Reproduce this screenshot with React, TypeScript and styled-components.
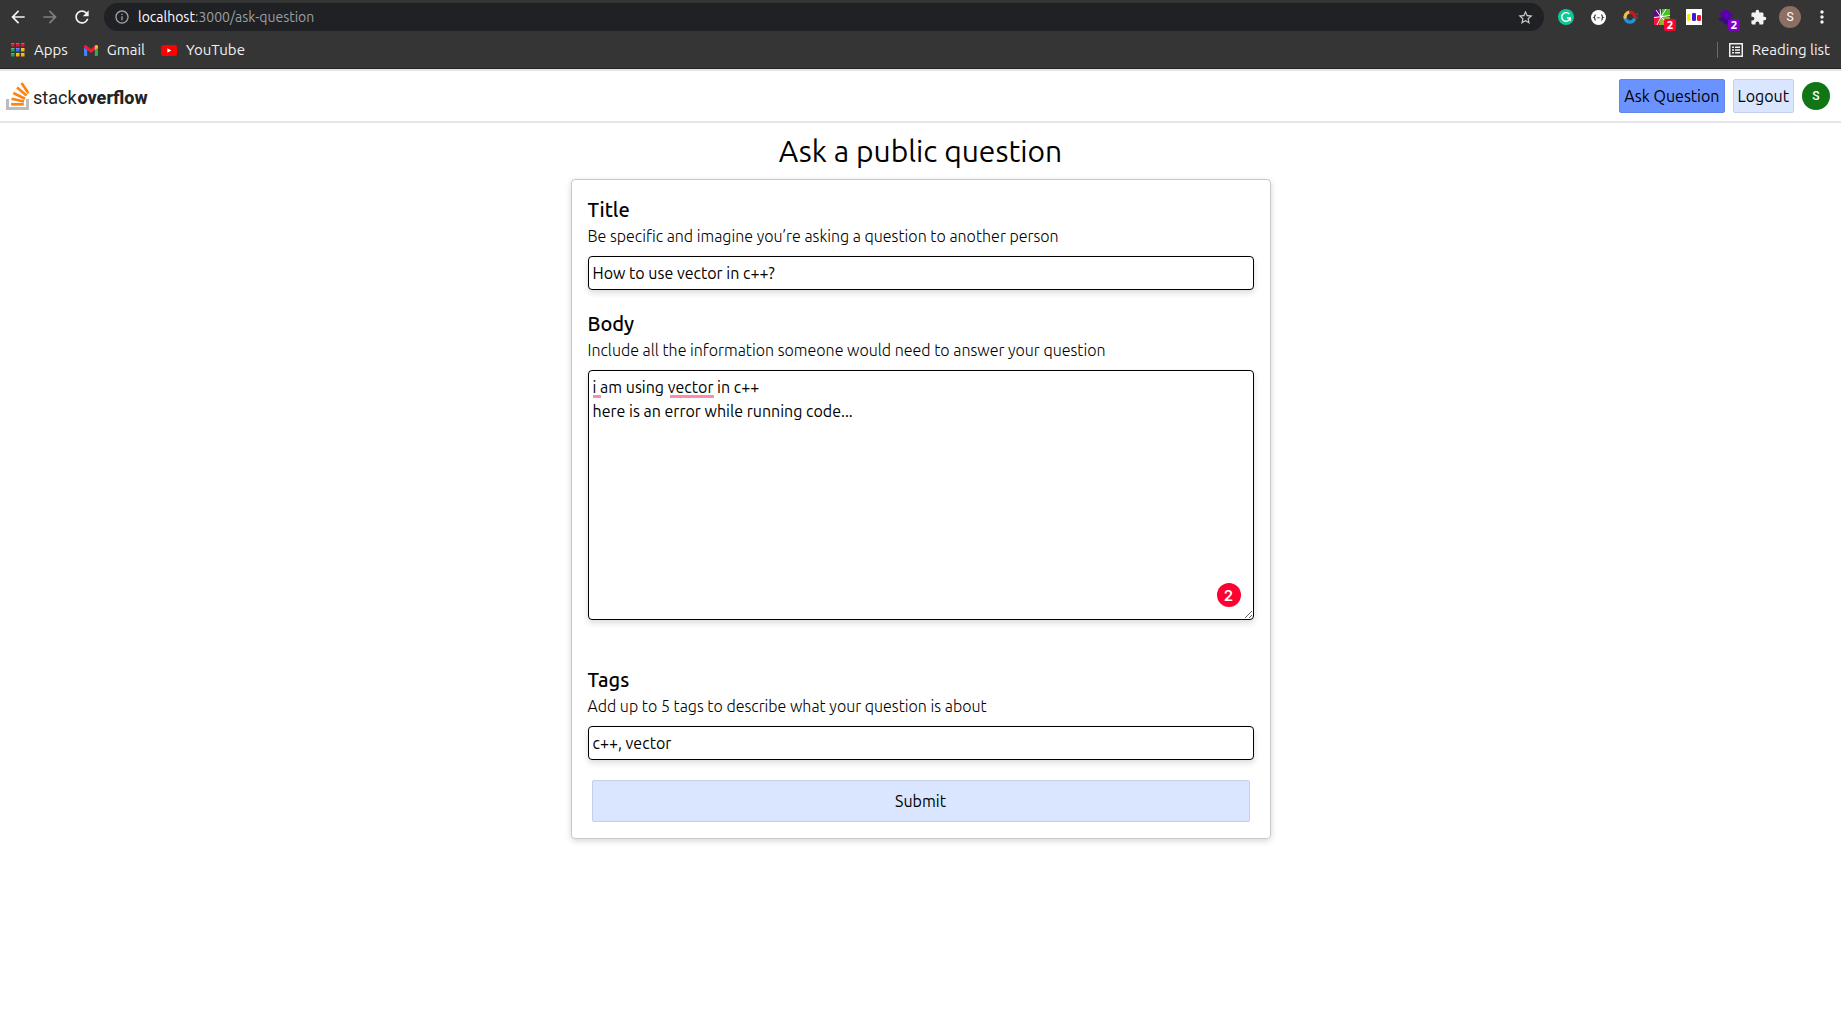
import React, { useState } from "react";
import styled, { createGlobalStyle } from "styled-components";
import { MdArrowBack, MdArrowForward, MdRefresh, MdInfoOutline, MdStarBorder, MdExtension, MdMoreVert } from "react-icons/md";

const GlobalStyle = createGlobalStyle`
  *, *::before, *::after { box-sizing: border-box; }
  body {
    margin: 0;
    background: #fff;
    color: #000;
    font-family: Ubuntu, "Noto Sans", "Open Sans", sans-serif;
    font-size: 16px;
    line-height: 24px;
  }
  button, input, textarea { font: inherit; color: inherit; margin: 0; }
`;

const Chrome = styled.div`
  background: #353535;
  border-bottom: 1px solid #222;
  color: #f1f1f1;
  font-size: 15px;
  line-height: 20px;
`;

const Toolbar = styled.div`
  display: flex;
  align-items: center;
  height: 34px;
  padding-right: 3px;
`;

const ToolButton = styled.button<{ $dim?: boolean }>`
  display: flex;
  align-items: center;
  justify-content: center;
  width: 32px;
  height: 32px;
  padding: 0;
  border: 0;
  background: none;
  color: ${(p) => (p.$dim ? "#808080" : "#f1f3f4")};
`;

const NavButtons = styled.div`
  display: flex;
  padding: 0 6px 0 2px;
`;

const AddressBar = styled.div`
  display: flex;
  flex: 1;
  align-items: center;
  gap: 8px;
  height: 28px;
  margin-right: 6px;
  padding: 0 10px;
  border-radius: 14px;
  background: #202124;
  color: #9aa0a6;
  font-size: 14px;
`;

const Address = styled.span`
  flex: 1;
  b { color: #fff; font-weight: 400; }
`;

const ProfileDot = styled.span`
  display: flex;
  align-items: center;
  justify-content: center;
  width: 22px;
  height: 22px;
  border-radius: 50%;
  background: #8d6e63;
  color: #fff;
  font: 12px/1 Roboto, sans-serif;
`;

const BookmarkBar = styled.div`
  display: flex;
  align-items: center;
  gap: 16px;
  height: 34px;
  padding: 0 11px 2px;
`;

const Bookmark = styled.a`
  display: flex;
  align-items: center;
  gap: 9px;
  color: inherit;
  text-decoration: none;
`;

const ReadingList = styled(Bookmark)`
  margin-left: auto;
  &::before {
    content: "";
    width: 1px;
    height: 16px;
    margin-right: 2px;
    background: #6b6b6b;
  }
`;

const Header = styled.header`
  display: flex;
  align-items: center;
  gap: 8px;
  height: 54px;
  padding: 0 11px 0 6px;
  border-top: 2px solid #e4e4ea;
  border-bottom: 2px solid #e4e4ea;
`;

const Logo = styled.a`
  display: flex;
  align-items: center;
  gap: 4px;
  margin-right: auto;
  color: #222426;
  font: 400 18px/24px Roboto, sans-serif;
  text-decoration: none;
`;

const Wordmark = styled.span`
  padding-top: 4px;
  b { font-weight: 800; padding-left: 1px; }
`;

const Button = styled.button<{ $primary?: boolean }>`
  height: 34px;
  padding: 0 4px;
  border: 1px solid ${(p) => (p.$primary ? "#6389e8" : "#c2d0ea")};
  border-radius: 2px;
  background: ${(p) => (p.$primary ? "#6b93ff" : "#dae6ff")};
`;

const Avatar = styled.span`
  display: flex;
  align-items: center;
  justify-content: center;
  width: 28px;
  height: 28px;
  border-radius: 50%;
  background: #0f7515;
  color: #fff;
  font: 500 12px/1 Roboto, sans-serif;
`;

const Main = styled.main`
  display: flex;
  flex-direction: column;
  align-items: center;
  padding: 8px 16px;
`;

const PageTitle = styled.h1`
  margin: 0;
  font-size: 30px;
  font-weight: 400;
  line-height: 40px;
  padding-bottom: 8px;
`;

const Card = styled.form`
  display: flex;
  flex-direction: column;
  gap: 20px;
  width: 100%;
  max-width: 700px;
  padding: 16px;
  border: 1px solid #c8c8c8;
  border-radius: 4px;
  box-shadow: 0 2px 6px rgba(0, 0, 0, 0.16);
`;

const Field = styled.div<{ $tall?: boolean }>`
  display: flex;
  flex-direction: column;
  padding-bottom: ${(p) => (p.$tall ? 26 : 0)}px;
`;

const Label = styled.label`
  font-size: 20px;
  font-weight: 500;
  line-height: 28px;
`;

const Hint = styled.span`
  margin-bottom: 8px;
  font-weight: 300;
`;

const TextInput = styled.input`
  height: 34px;
  padding: 0 4px;
  border: 1px solid #000;
  border-radius: 4px;
  background: #fff;
  box-shadow: 0 3px 6px rgba(0, 0, 0, 0.14);
`;

const EditorBox = styled.div`
  position: relative;
  display: flex;
`;

const TextArea = styled.textarea`
  width: 100%;
  height: 250px;
  padding: 4px;
  border: 1px solid #000;
  border-radius: 4px;
  background: #fff;
  box-shadow: 0 3px 6px rgba(0, 0, 0, 0.14);
  resize: vertical;
`;

const Underline = styled.span<{ $left: number; $width: number }>`
  position: absolute;
  top: 25px;
  left: ${(p) => p.$left}px;
  width: ${(p) => p.$width}px;
  height: 3px;
  background: #ff8bac;
`;

const IssueCount = styled.span`
  position: absolute;
  right: 13px;
  bottom: 13px;
  width: 24px;
  height: 24px;
  border-radius: 50%;
  background: #ff0032;
  color: #fff;
  font: 600 15px/25px Inter, sans-serif;
  text-align: center;
`;

const Submit = styled(Button)`
  height: 42px;
  margin: 0 4px;
`;

const AppsIcon = () => {
  const colors = ["#e8132b", "#e8132b", "#e8132b", "#13a65a", "#3f6df0", "#f4b400", "#13a65a", "#f4b400", "#f4b400"];
  return (
    <svg width="14" height="14" viewBox="0 0 14 14" aria-hidden="true">
      {colors.map((c, i) => (
        <g key={i}>
          <rect x={(i % 3) * 5} y={Math.floor(i / 3) * 5} width="3.500" height="3.500" fill={c} />
          <rect x={(i % 3) * 5} y={Math.floor(i / 3) * 5} width="3.500" height="1" fill="#fff" opacity=".25" />
        </g>
      ))}
    </svg>
  );
};

const GmailIcon = () => (
  <svg width="14" height="11" viewBox="0 0 14 11" aria-hidden="true">
    <path d="M0 2v8a1 1 0 0 0 1 1h2.200V4.500z" fill="#4285f4" />
    <path d="M14 2v8a1 1 0 0 1-1 1h-2.200V4.500z" fill="#34a853" />
    <path d="M0 1.500C0 .3 1.400-.4 2.500.5L7 4 11 .7V4.800L7 8 3.200 5 0 2.700z" fill="#ea1c3b" />
    <path d="M10.800.8C12-.5 14 0 14 1.600V2.700L10.800 5z" fill="#fbbc04" />
  </svg>
);

const YouTubeIcon = () => (
  <svg width="16" height="11" viewBox="0 0 16 11" aria-hidden="true">
    <rect width="16" height="11" rx="2.500" fill="#f00" />
    <path d="M6.300 3.200v4.600l4-2.300z" fill="#fff" />
  </svg>
);

const ReadingIcon = () => (
  <svg width="14" height="14" viewBox="0 0 14 14" aria-hidden="true" fill="#f1f1f1">
    <path d="M0 0h14v14H0zM1.500 1.500v11h11v-11z" fillRule="evenodd" />
    <path d="M3 3.500h2v1.500H3zM3 6.300h2v1.500H3zM3 9h2v1.500H3zM6 3.500h5v1.500H6zM6 6.300h5v1.500H6zM6 9h5v1.500H6z" />
  </svg>
);

const GrammarIcon = () => (
  <svg width="16" height="16" viewBox="0 0 16 16" aria-hidden="true">
    <circle cx="8" cy="8" r="8" fill="#11c794" />
    <path d="M11.200 5A4.300 4.300 0 1 0 12.200 9H9" fill="none" stroke="#fff" strokeWidth="1.400" />
    <path d="M12.200 8.500v3.500" stroke="#fff" strokeWidth="1.200" />
  </svg>
);

const JsonIcon = () => (
  <svg width="15" height="15" viewBox="0 0 15 15" aria-hidden="true">
    <circle cx="7.500" cy="7.500" r="7.500" fill="#fff" />
    <path d="M4.800 4.800q-1 0-1 1.200T3 7.500q.8.300.8 1.500T4.800 10.200M10.200 4.800q1 0 1 1.200t.8 1.500q-.8.300-.8 1.500T10.200 10.200" fill="none" stroke="#333" strokeWidth="1.200" />
    <path d="M5.700 7.800h1M7 7.800h1M8.300 7.800h1" stroke="#444" strokeWidth="1" />
  </svg>
);

const RingIcon = () => (
  <svg width="16" height="16" viewBox="0 0 16 16" aria-hidden="true" fill="none" strokeWidth="3.200">
    <path d="M7.500 3.200A4.800 4.800 0 0 0 3.500 10" stroke="#f3bf42" />
    <path d="M3.300 9.500A4.800 4.800 0 0 0 12.600 9.500" stroke="#2591dc" />
    <path d="M12.700 9.300A4.800 4.800 0 0 0 7.500 3.200" stroke="#ce171b" />
    <path d="M15.200 4v2M15.200 8v1.500" stroke="#666" strokeWidth="1" />
  </svg>
);

const BurstIcon = () => (
  <svg width="28" height="28" viewBox="0 0 28 28" aria-hidden="true">
    <path d="M6 6h9v7l-9 2z" fill="#56107e" />
    <path d="M14 6h8v7l-9 2z" fill="#45c322" />
    <path d="M6 14h8l-2 8H6z" fill="#f5143a" />
    <path d="M13 14h9v8H11z" fill="#8bb921" />
    <path d="M6 14.500 22 12.500M13 14 18 6M13 14 9 22M13 14 8 7M13 14l-1-8M13 14l6 6" stroke="#fff" strokeWidth="1" />
    <rect x="16" y="16" width="12" height="12" rx="2" fill="#ff0032" />
    <text x="22" y="26" textAnchor="middle" fontFamily="Noto Sans" fontWeight="700" fontSize="11" fill="#fff">2</text>
  </svg>
);

const BarsIcon = () => (
  <svg width="16" height="16" viewBox="0 0 16 16" aria-hidden="true">
    <rect width="16" height="16" fill="#fff" />
    <rect x="1" y="5" width="3.500" height="7" rx="1.200" fill="#f8ec00" />
    <rect x="6" y="4" width="4" height="8" rx="1.200" fill="#3d1bdc" />
    <rect x="11" y="6" width="4" height="6" rx="1.200" fill="#ef1430" />
  </svg>
);

const LayersIcon = () => (
  <svg width="28" height="28" viewBox="0 0 28 28" aria-hidden="true">
    <path d="m6 16 5-3 10 3-6 6z" fill="#3b0a86" />
    <path d="m7 11 7-5 7 6-6 5z" fill="#5b00ad" />
    <rect x="16" y="16" width="12" height="12" rx="2" fill="#8000c8" />
    <text x="22" y="26" textAnchor="middle" fontFamily="Noto Sans" fontWeight="700" fontSize="11" fill="#fff">2</text>
  </svg>
);

const StackIcon = () => (
  <svg width="23" height="28" viewBox="0 0 23 28" aria-hidden="true" fill="none">
    <path d="M1.500 17v9.500h20V17" stroke="#bcbcbc" strokeWidth="3" />
    <g stroke="#fb8412" strokeWidth="2.700">
      <path d="M5.200 22.300h12.600" />
      <path d="M5.500 16.800l12.500 2.700" />
      <path d="M7.300 11l11.700 5.800" />
      <path d="M11 5.500l9.500 8" />
      <path d="M15.500 1l7 10.200" />
    </g>
  </svg>
);

const extensions = [
  { name: "Writing assistant", icon: <GrammarIcon /> },
  { name: "JSON viewer", icon: <JsonIcon /> },
  { name: "Color picker", icon: <RingIcon /> },
  { name: "Spelling", icon: <BurstIcon /> },
  { name: "Charts", icon: <BarsIcon /> },
  { name: "Layers", icon: <LayersIcon /> },
  { name: "Extensions", icon: <MdExtension size={17} /> },
  { name: "Profile", icon: <ProfileDot>S</ProfileDot> },
  { name: "Menu", icon: <MdMoreVert size={20} /> },
];

export default function App() {
  const [title, setTitle] = useState("How to use vector in c++?");
  const [body, setBody] = useState("i am using vector in c++\nhere is an error while running code...");
  const [tags, setTags] = useState("c++, vector");

  return (
    <>
      <GlobalStyle />
      <Chrome>
        <Toolbar>
          <NavButtons>
            <ToolButton aria-label="Back"><MdArrowBack size={20} /></ToolButton>
            <ToolButton aria-label="Forward" $dim><MdArrowForward size={20} /></ToolButton>
            <ToolButton aria-label="Reload"><MdRefresh size={20} /></ToolButton>
          </NavButtons>
          <AddressBar>
            <MdInfoOutline size={16} />
            <Address><b>localhost</b>:3000/ask-question</Address>
            <MdStarBorder size={17} color="#d0d0d0" />
          </AddressBar>
          {extensions.map((e) => (
            <ToolButton key={e.name} aria-label={e.name}>{e.icon}</ToolButton>
          ))}
        </Toolbar>
        <BookmarkBar>
          <Bookmark href="#apps"><AppsIcon />Apps</Bookmark>
          <Bookmark href="#gmail"><GmailIcon />Gmail</Bookmark>
          <Bookmark href="#youtube"><YouTubeIcon />YouTube</Bookmark>
          <ReadingList href="#reading"><ReadingIcon />Reading list</ReadingList>
        </BookmarkBar>
      </Chrome>
      <Header>
        <Logo href="#home"><StackIcon /><Wordmark>stack<b>overflow</b></Wordmark></Logo>
        <Button $primary>Ask Question</Button>
        <Button>Logout</Button>
        <Avatar>S</Avatar>
      </Header>
      <Main>
        <PageTitle>Ask a public question</PageTitle>
        <Card onSubmit={(e) => e.preventDefault()}>
          <Field>
            <Label htmlFor="title">Title</Label>
            <Hint>Be specific and imagine you’re asking a question to another person</Hint>
            <TextInput id="title" value={title} onChange={(e) => setTitle(e.target.value)} />
          </Field>
          <Field $tall>
            <Label htmlFor="body">Body</Label>
            <Hint>Include all the information someone would need to answer your question</Hint>
            <EditorBox>
              <TextArea id="body" spellCheck={false} value={body} onChange={(e) => setBody(e.target.value)} />
              <Underline $left={5} $width={8} />
              <Underline $left={82} $width={44} />
              <IssueCount>2</IssueCount>
            </EditorBox>
          </Field>
          <Field>
            <Label htmlFor="tags">Tags</Label>
            <Hint>Add up to 5 tags to describe what your question is about</Hint>
            <TextInput id="tags" value={tags} onChange={(e) => setTags(e.target.value)} />
          </Field>
          <Submit type="submit">Submit</Submit>
        </Card>
      </Main>
    </>
  );
}
